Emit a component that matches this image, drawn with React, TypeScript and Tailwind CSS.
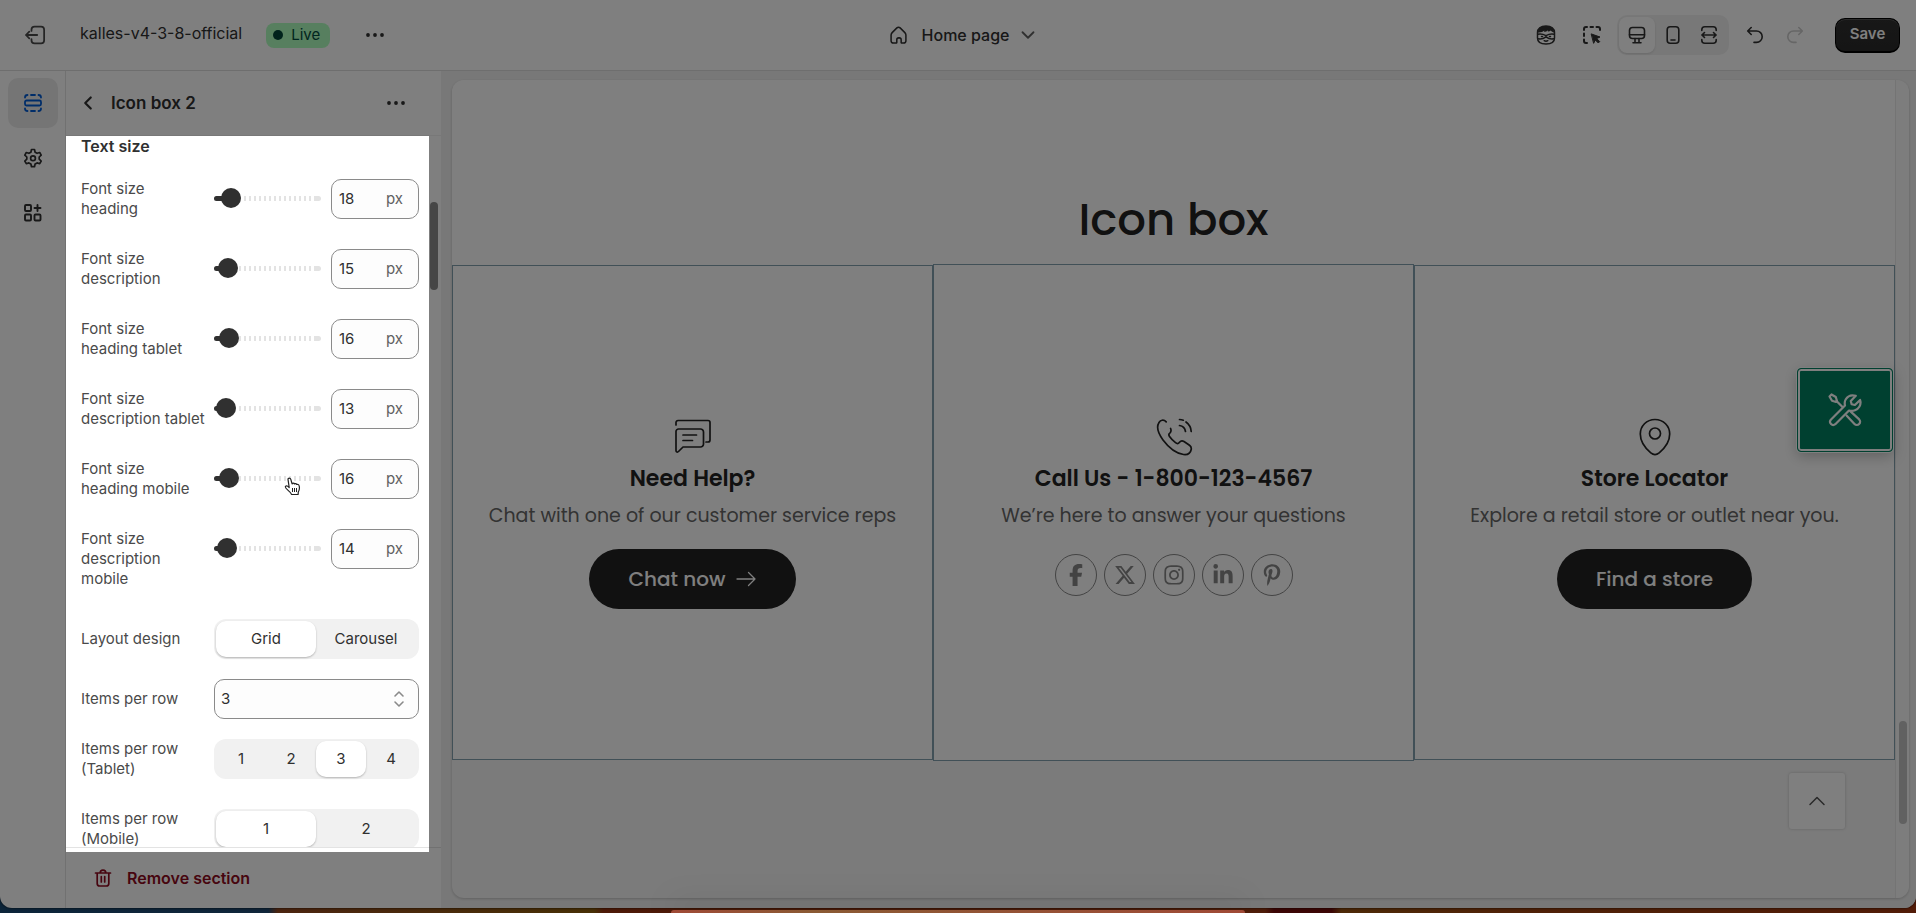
import React, { useState } from 'react';
import { ChevronDown, ChevronLeft, ChevronUp } from 'lucide-react';
import { FaFacebookF, FaInstagram, FaLinkedinIn, FaPinterestP, FaXTwitter } from 'react-icons/fa6';
import clsx from 'clsx';

const SIZES = [
    { id: 'heading', label: 'Font size\nheading', value: 18 },
    { id: 'description', label: 'Font size\ndescription', value: 15 },
    { id: 'heading-tablet', label: 'Font size\nheading tablet', value: 16 },
    { id: 'description-tablet', label: 'Font size\ndescription tablet', value: 13 },
    { id: 'heading-mobile', label: 'Font size\nheading mobile', value: 16 },
    { id: 'description-mobile', label: 'Font size\ndescription mobile', value: 14 },
];

const MIN = 11;
const MAX = 98;

const SOCIALS = [
    { name: 'Facebook', icon: FaFacebookF },
    { name: 'X', icon: FaXTwitter },
    { name: 'Instagram', icon: FaInstagram },
    { name: 'LinkedIn', icon: FaLinkedinIn },
    { name: 'Pinterest', icon: FaPinterestP },
];

type IconProps = { children: React.ReactNode; size?: number; box?: number; stroke?: number; className?: string };

function Icon({ children, size = 20, box = 20, stroke = 1.6, className }: IconProps) {
    return (
        <svg
            width={size}
            height={size}
            viewBox={`0 0 ${box} ${box}`}
            fill="none"
            stroke="currentColor"
            strokeWidth={stroke}
            strokeLinecap="round"
            strokeLinejoin="round"
            className={className}
            aria-hidden="true"
        >
            {children}
        </svg>
    );
}

function Dots() {
    return (
        <Icon>
            <g fill="currentColor" stroke="none">
                <circle cx="3" cy="10" r="1.9" />
                <circle cx="10" cy="10" r="1.9" />
                <circle cx="17" cy="10" r="1.9" />
            </g>
        </Icon>
    );
}

function TopBar() {
    return (
        <header className="flex h-[71px] shrink-0 items-center border-b border-[#dcdcdc] bg-white text-[#303030]">
            <div className="flex flex-1 items-center">
                <button aria-label="Exit" className="ml-6 text-[#4a4a4a]">
                    <Icon size={22}>
                        <path d="M6.800 6.300V5.200a2.800 2.800 0 0 1 2.800-2.800H15.500a2.800 2.800 0 0 1 2.800 2.800v9.600a2.800 2.800 0 0 1-2.800 2.800H9.600a2.800 2.800 0 0 1-2.800-2.800v-1.100" />
                        <path d="M12 10H1.800m3-3L1.800 10l3 3" />
                    </Icon>
                </button>
                <span className="ml-[34px] pb-1 text-base">kalles-v4-3-8-official</span>
                <span className="ml-6 flex h-[25px] items-center gap-2 rounded-lg bg-[#affebf] pr-2.5 pl-[7px] text-[15px] text-[#014b40]">
                    <span className="size-2.5 rounded-full bg-[#004438]" />
                    Live
                </span>
                <button aria-label="More actions" className="ml-[35px]">
                    <Dots />
                </button>
            </div>

            <button className="ml-7 flex items-center gap-3.5 text-base font-medium">
                <Icon size={19}>
                    <path d="M2.200 9.600c0-1 .4-1.900 1.100-2.600l5-5a2.400 2.400 0 0 1 3.400 0l5 5c.7.7 1.100 1.600 1.100 2.600V15.500a2.500 2.500 0 0 1-2.500 2.500h-1.800a.7.7 0 0 1-.7-.7V14.500a2 2 0 0 0-2-2h-.600a2 2 0 0 0-2 2v2.800a.7.7 0 0 1-.7.7H4.700a2.500 2.500 0 0 1-2.500-2.500z" />
                </Icon>
                Home page
                <ChevronDown size={22} strokeWidth={2} className="-ml-1.5 text-[#616161]" />
            </button>

            <div className="flex flex-1 items-center justify-end pr-4">
                <button aria-label="Sidekick">
                    <Icon size={20} stroke={1.5}>
                        <path d="M1.500 7.500C1.500 4 4.500 1 10 1s8.500 3 8.500 6.500V13c0 3.500-3 6-8.500 6s-8.500-2.500-8.500-6z" />
                        <path d="M2 7.500c-.5-4 3-6.500 8-6.500 5.200 0 8.500 2.500 8 6.500-1.200-.2-2.500-1-3.200-2-.8.8-2 1.200-3 1l.2-1.200c-1 1-2.500 1.500-4 1.500l.3-1.200C7 7 4.500 7.700 2 7.500z" fill="currentColor" stroke="none" />
                        <path d="M1.800 9.300c3-.6 5.700 0 8.200 1.300 2.500-1.300 5.200-1.900 8.200-1.300M2.500 13.800c3.500.7 5.500-.5 7.500-2 2 1.500 4 2.700 7.500 2" />
                        <path d="M5.500 11.500h1M13.500 11.500h1M8.200 15.700c1.200.8 2.400.8 3.600 0" />
                    </Icon>
                </button>
                <button aria-label="Select element" className="ml-[26px]">
                    <Icon size={20} stroke={2}>
                        <path d="M2 5V4a2 2 0 0 1 2-2h1M8.500 2h2.500M14.500 2H16a2 2 0 0 1 2 2v1M2 8.500V11M2 14.500V16a2 2 0 0 0 2 2h1" />
                        <path d="M9.500 9l8.500 3-3.300 1.600 3 3-1.400 1.400-3-3L11.800 18z" fill="currentColor" stroke="currentColor" strokeWidth={1} />
                    </Icon>
                </button>
                <div className="ml-[15px] flex h-10 items-center rounded-[10px] bg-[#f1f1f1] p-0.5">
                    <button aria-label="Desktop" aria-pressed="true" className="flex size-9 items-center justify-center rounded-lg bg-white shadow">
                        <Icon>
                            <rect x="2.500" y="2.500" width="15" height="11" rx="3" />
                            <path d="M2.500 9.700h15M8 13.500v4M12 13.500v4M6 17.800h8" />
                        </Icon>
                    </button>
                    <button aria-label="Mobile" className="flex h-9 w-9 items-center justify-center">
                        <Icon>
                            <rect x="4.200" y="1.800" width="11.600" height="16.400" rx="3" />
                            <path d="M8 15h4" />
                        </Icon>
                    </button>
                    <button aria-label="Full width" className="flex h-9 w-9 items-center justify-center">
                        <Icon>
                            <path d="M2.800 5.500v-.7a3 3 0 0 1 3-3h8.400a3 3 0 0 1 3 3v.7M2.800 14.500v.7a3 3 0 0 0 3 3h8.400a3 3 0 0 0 3-3v-.7" />
                            <path d="M2.800 10h14.400M5.500 7.500L3 10l2.500 2.500M14.500 7.500L17 10l-2.500 2.500" />
                        </Icon>
                    </button>
                </div>
                <button aria-label="Undo" className="ml-4">
                    <Icon>
                        <path d="M6.200 2.500L2.700 6l3.500 3.500M3 6h8.500a5.700 5.700 0 0 1 0 11.400H9" />
                    </Icon>
                </button>
                <button aria-label="Redo" disabled className="ml-5 text-[#cccccc]">
                    <Icon>
                        <path d="M13.800 2.500L17.300 6l-3.500 3.500M17 6H8.500a5.700 5.700 0 0 0 0 11.400H11" />
                    </Icon>
                </button>
                <button className="ml-[30px] h-[35px] w-[65px] rounded-[10px] border border-b-2 border-black bg-gradient-to-b from-[#303030] to-[#2a2a2a] text-[15px] font-semibold text-white shadow-[inset_0_1px_0_#555]">
                    Save
                </button>
            </div>
        </header>
    );
}

function Rail() {
    return (
        <nav className="flex w-[66px] shrink-0 flex-col items-center gap-[5px] border-r border-[#e3e3e3] pt-[7px] text-[#303030]">
            <button aria-label="Sections" className="flex size-[50px] items-center justify-center rounded-[10px] bg-[#ebebeb] text-[#005bd3]">
                <Icon stroke={1.8}>
                    <rect x="2" y="7.500" width="16" height="5" rx="1.500" />
                    <path d="M2 4.500A2.500 2.500 0 0 1 4.500 2M8 2h4M15.500 2A2.500 2.500 0 0 1 18 4.500M2 15.500A2.500 2.500 0 0 0 4.500 18M8 18h4M15.500 18a2.500 2.500 0 0 0 2.500-2.500" />
                </Icon>
            </button>
            <button aria-label="Theme settings" className="flex size-[50px] items-center justify-center">
                <Icon stroke={1.700}>
                    <path d="M8.500 1.500h3l.6 2.700 2 1.100 2.600-.8 1.500 2.600-2 1.900v2.200l2 1.900-1.500 2.600-2.600-.8-2 1.100-.6 2.700h-3l-.6-2.700-2-1.100-2.600.8-1.500-2.600 2-1.900V9l-2-1.900 1.500-2.600 2.600.8 2-1.100z" />
                    <circle cx="10" cy="10.200" r="2.400" />
                </Icon>
            </button>
            <button aria-label="App embeds" className="flex size-[50px] items-center justify-center">
                <Icon stroke={1.900}>
                    <rect x="2" y="2" width="6" height="6" rx="1" />
                    <rect x="2" y="11.500" width="6" height="6" rx="1" />
                    <rect x="11.500" y="11.500" width="6" height="6" rx="1" />
                    <path d="M14.500 2v6M11.500 5h6" />
                </Icon>
            </button>
        </nav>
    );
}

function SizeRow({ id, label, initial }: { id: string; label: string; initial: number }) {
    const [value, setValue] = useState(initial);
    const fill = ((value - MIN) / (MAX - MIN)) * 81 + 9;

    return (
        <div className="flex">
            <label htmlFor={id} className="mr-2 w-[125px] shrink-0 pb-2.5 whitespace-pre-line">
                {label}
            </label>
            <div className="relative mt-[17px] h-[5px] min-w-0 flex-1">
                <div className="flex h-full overflow-hidden rounded-full">
                    <div className="flex-1 bg-[repeating-linear-gradient(90deg,#e3e3e3_0_2px,transparent_2px_5px)]" />
                    <div className="w-[7px] bg-[#e3e3e3]" />
                </div>
                <div className="absolute inset-y-0 left-0 rounded-full bg-[#303030]" style={{ width: `${fill}%` }} />
                <input
                    id={id}
                    type="range"
                    min={MIN}
                    max={MAX}
                    value={value}
                    onChange={e => setValue(Number(e.target.value))}
                    className="absolute inset-x-0 -top-2 h-5 w-full cursor-pointer appearance-none bg-transparent [&::-webkit-slider-thumb]:size-5 [&::-webkit-slider-thumb]:appearance-none [&::-webkit-slider-thumb]:rounded-full [&::-webkit-slider-thumb]:bg-[#303030]"
                />
            </div>
            <div className="ml-2.5 flex h-10 w-[88px] items-center rounded-[10px] border border-[#8a8a8a] bg-[#fdfdfd] pr-[15px] pl-[7px]">
                <input
                    aria-label={`${label} value`}
                    inputMode="numeric"
                    value={value}
                    onChange={e => setValue(Number(e.target.value) || MIN)}
                    className="w-full min-w-0 bg-transparent text-[#303030] outline-none"
                />
                <span className="text-[#616161]">px</span>
            </div>
        </div>
    );
}

function Segmented({ label, options, initial, single }: { label: string; options: string[]; initial: string; single?: boolean }) {
    const [active, setActive] = useState(initial);

    return (
        <div className="flex" role="group" aria-label={label}>
            <span className={clsx('mr-2 w-[125px] shrink-0 pb-2.5', single && 'pt-2.5')}>{label}</span>
            <div className="flex h-10 flex-1 rounded-xl bg-[#f1f1f1] py-0.5 pr-[3px] pl-0.5">
                {options.map(o => (
                    <button
                        key={o}
                        aria-pressed={active === o}
                        onClick={() => setActive(o)}
                        className={clsx(
                            'flex-1 basis-0 rounded-[10px] text-[#303030]',
                            active === o && 'bg-white shadow-[0_1px_2px_rgba(0,0,0,0.25)]'
                        )}
                    >
                        {o}
                    </button>
                ))}
            </div>
        </div>
    );
}

function SettingsPanel() {
    return (
        <aside className="relative flex w-[375px] shrink-0 flex-col bg-white">
            <div className="flex h-[65px] shrink-0 items-center border-b border-[#f1f1f1] pr-[35px] pl-[11px] text-[#303030]">
                <button aria-label="Back">
                    <ChevronLeft size={22} strokeWidth={2.400} />
                </button>
                <h2 className="ml-3 flex-1 pt-0.5 text-[17px] font-semibold">Icon box 2</h2>
                <button aria-label="Section actions">
                    <Dots />
                </button>
            </div>

            <div className="min-h-0 flex-1 overflow-hidden pr-[22px] pl-[15px] text-[15px] leading-5 text-[#4a4a4a]">
                <h3 className="mb-[23px] text-base leading-5 font-semibold text-[#303030]">Text size</h3>
                <div className="flex flex-col gap-5">
                    {SIZES.map(s => (
                        <SizeRow key={s.id} id={s.id} label={s.label} initial={s.value} />
                    ))}
                    <Segmented label="Layout design" options={['Grid', 'Carousel']} initial="Grid" single />
                    <div className="flex">
                        <label htmlFor="per-row" className="mr-2 w-[125px] shrink-0 py-2.5">
                            Items per row
                        </label>
                        <div className="relative flex-1">
                            <select
                                id="per-row"
                                defaultValue="3"
                                className="h-10 w-full appearance-none rounded-[10px] border border-[#8a8a8a] bg-[#fdfdfd] px-1.5 text-[#303030]"
                            >
                                {['1', '2', '3', '4', '5', '6'].map(n => (
                                    <option key={n}>{n}</option>
                                ))}
                            </select>
                            <Icon size={20} stroke={1.600} className="pointer-events-none absolute top-2.5 right-2.5 text-[#8a8a8a]">
                                <path d="M6 7l4-4 4 4M6 13l4 4 4-4" />
                            </Icon>
                        </div>
                    </div>
                    <Segmented label="Items per row (Tablet)" options={['1', '2', '3', '4']} initial="3" />
                    <Segmented label="Items per row (Mobile)" options={['1', '2']} initial="1" />
                </div>
            </div>

            <div className="flex h-[61px] shrink-0 items-center border-t border-[#e3e3e3] pl-[27px]">
                <button className="flex items-center gap-3.5 text-base font-semibold text-[#8e0b21]">
                    <Icon size={20} stroke={1.700}>
                        <path d="M2.500 5h15M7.200 5a2.800 2.800 0 0 1 5.600 0M4.200 5v10.500A2.500 2.500 0 0 0 6.700 18h6.600a2.500 2.500 0 0 0 2.500-2.500V5M8.300 8.500v5.500M11.700 8.500v5.500" />
                    </Icon>
                    Remove section
                </button>
            </div>

            {/* scrollbar */}
            <div className="absolute top-[131px] right-[3px] h-[88px] w-2 rounded-full bg-[#8c8c8c]" />

            {/* spotlight: everything outside the settings list is dimmed */}
            <div className="pointer-events-none absolute top-[65px] right-3 bottom-14 left-0 z-50 shadow-[0_0_0_2400px_rgba(0,0,0,0.5)]" />

            {/* pointer */}
            <svg width="18" height="20" viewBox="0 0 18 20" className="pointer-events-none absolute top-[406px] left-[218px] z-50" aria-hidden="true">
                <path
                    d="M4 2.300C4 .7 6.400.7 6.800 2.300l1.300 4.500c.6-.9 2-.8 2.400.1.800-.6 1.900-.3 2.200.6.900-.4 2.200.1 2.400 1.200.6 2 .3 4.300-.8 6.300l-.2 2.500H7.600c-1-2-2.700-3.500-4-4.600C2 11.500.7 10.300 1.500 9.300c.9-1 2.400-.3 3.700 1.200z"
                    fill="#fff"
                    stroke="#222"
                    strokeWidth="1.200"
                    strokeLinejoin="round"
                />
                <path d="M8.500 11v4M10.500 11v4M12.500 11v4" stroke="#222" strokeWidth="1" />
            </svg>
        </aside>
    );
}

function BoxColumn({ icon, title, text, children, className }: { icon: React.ReactNode; title: string; text: string; children: React.ReactNode; className?: string }) {
    return (
        <div className={clsx('flex flex-1 basis-0 flex-col items-center justify-center border border-[#83a0ae]', className)}>
            <div className="flex h-10 items-center text-[#222222]">{icon}</div>
            <h4 className="mt-[7px] text-[22px] leading-[30px] font-semibold text-[#222222]">{title}</h4>
            <p className="mt-2 text-[19px] leading-7 text-[#666666]">{text}</p>
            {children}
        </div>
    );
}

function Preview() {
    return (
        <main className="flex min-w-0 flex-1 rounded-br-xl bg-[#f1f1f1] pt-[9px] pr-[7px] pb-2.5 pl-[11px]">
            <div className="relative flex min-w-0 flex-1 overflow-hidden rounded-xl bg-[#f6f6f6] font-['Poppins','Inter',sans-serif] shadow-[0_1px_3px_rgba(0,0,0,0.2)] [font-feature-settings:'cv11']">
                <div className="min-w-0 flex-1">
                    <section className="bg-white pt-[115px]">
                        <h1 className="mb-5 text-center text-[45px] leading-[50px] font-medium text-[#222222]">Icon box</h1>
                        <div className="flex h-[495px]">
                            <BoxColumn
                                title="Need Help?"
                                text="Chat with one of our customer service reps"
                                icon={
                                    <Icon size={38} box={38} stroke={1.700}>
                                        <path d="M2 7V4.500A2 2 0 0 1 4 2.500h30a2 2 0 0 1 2 2V22a2 2 0 0 1-2 2h-2" />
                                        <path d="M4.500 11h22a3 3 0 0 1 3 3v12a3 3 0 0 1-3 3H9l-4.500 4.500C3.500 34.500 2 34 2 32.500V13.500A2.500 2.500 0 0 1 4.500 11zM9 17h13.500M9 22.500h9.500" />
                                    </Icon>
                                }
                            >
                                <a href="#chat" className="mt-[19px] flex h-[60px] w-[207px] items-center justify-center gap-[11px] rounded-full bg-[#222222] text-xl font-medium text-white">
                                    Chat now
                                    <Icon size={20} stroke={1.300}>
                                        <path d="M1 10h18M12.500 3.500L19 10l-6.500 6.500" />
                                    </Icon>
                                </a>
                            </BoxColumn>
                            <BoxColumn
                                className="-my-px"
                                title="Call Us - 1-800-123-4567"
                                text="We’re here to answer your questions"
                                icon={
                                    <Icon size={38} box={38} stroke={1.700}>
                                        <path d="M11.200 3.800C8.500 1 5.500 2.200 4 4.500 1.500 8.500 2.500 14.500 8 22c6 8 13.500 13.500 20.500 14.500 4 .5 7-1.500 7.700-5 .4-2-.3-3.200-1.700-4.200l-5.500-3.800c-1.800-1.200-3.300-.8-4.500.8-1.300 1.700-2.600 1.500-4 .3-2.500-2-4.700-4.200-6-6.100-1-1.400-.8-2.500.3-3.400 1.500-1.300 1.600-2.600.8-4.600" />
                                        <path d="M24.500 1.500c1.500 0 2.500.2 3.800.7M31 4c3 2.200 5 5.500 5.200 9.500M24.500 7.500c3.500.5 5.500 2.700 6 6" />
                                    </Icon>
                                }
                            >
                                <div className="mt-[19px] flex h-[60px] gap-[7px] pt-[5px]">
                                    {SOCIALS.map(s => {
                                        const Glyph = s.icon;
                                        return (
                                            <a key={s.name} href={`#${s.name}`} aria-label={s.name} className="flex size-[42px] items-center justify-center rounded-full border border-[#878787] text-[#878787]">
                                                <Glyph size={22} />
                                            </a>
                                        );
                                    })}
                                </div>
                            </BoxColumn>
                            <BoxColumn
                                title="Store Locator"
                                text="Explore a retail store or outlet near you."
                                icon={
                                    <Icon size={38} box={38} stroke={1.700}>
                                        <path d="M19 1.500c8.500 0 14.700 6.500 14.700 14.500 0 7.500-4.700 14-10.500 18.800-2.700 2.200-5.700 2.200-8.400 0C9 30 4.300 23.500 4.300 16 4.300 8 10.500 1.500 19 1.500z" />
                                        <circle cx="19" cy="15.500" r="5.500" />
                                    </Icon>
                                }
                            >
                                <a href="#store" className="mt-[19px] flex h-[60px] w-[195px] items-center justify-center rounded-full bg-[#222222] text-xl font-medium text-white">
                                    Find a store
                                </a>
                            </BoxColumn>
                        </div>
                    </section>
                </div>
                <div className="relative w-3.5 border-l border-[#e8e8e8] bg-[#fafafa]">
                    <div className="absolute right-0.5 bottom-[74px] h-[103px] w-2 rounded-full bg-[#c2c2c2]" />
                </div>

                <button aria-label="Tools" className="absolute top-[288px] right-4 flex h-[84px] w-24 items-center justify-center rounded-sm border border-[#008060] bg-[#008060] text-white shadow-[inset_0_0_0_2px_#fff,0_0_0_1px_#fff,0_4px_14px_rgba(0,0,0,0.25)]">
                    <Icon size={34} box={34} stroke={2.200}>
                        <path d="M14 15.500L2.800 26.700a3.200 3.200 0 0 0 4.500 4.500L21 17.500c4 1.200 8.500-.5 10.500-4 1.200-2.200 1.300-4.500.6-6.500l-5.200 5-3.300-.8-.8-3.300 5-5.100c-4-1.200-8 .2-10 3.500-1.200 2-1.300 4.200-.8 6.200z" />
                        <path d="M18.500 22.500l8 8.500a3.200 3.200 0 0 0 4.700-4.600l-8.700-8M14.500 14L8.500 8" />
                        <path d="M3.500 1.500L7.800 4l1.200 4-1 1-4-1.200L1.500 3.500z" />
                    </Icon>
                </button>

                <button aria-label="Back to top" className="absolute right-16 bottom-[69px] flex size-14 items-center justify-center rounded-[3px] bg-white text-[#555] shadow-[0_0_3px_rgba(0,0,0,0.2)]">
                    <ChevronUp size={28} strokeWidth={1.300} />
                </button>
            </div>
        </main>
    );
}

export default function App() {
    return (
        <div className="relative h-screen overflow-hidden bg-[linear-gradient(90deg,#184a74_0%,#204c74_14%,#984a20_14.5%,#90600c_31%,#9c3410_31.5%,#a03c14_66%,#780c0a_66.5%,#780c0a_69.5%,#9c5410_70%,#a04410_79%,#a43810_100%)] pb-[5px] font-['Inter',sans-serif]">
            <div className="flex h-full flex-col rounded-b-xl bg-white shadow-[0_0_3px_rgba(0,0,0,0.8)]">
                <TopBar />
                <div className="flex min-h-0 flex-1">
                    <Rail />
                    <SettingsPanel />
                    <Preview />
                </div>
            </div>
            {/* edge of the dock peeking up at the bottom, drawn above the dimmer */}
            <div className="pointer-events-none absolute bottom-0 left-[35%] z-50 h-[3px] w-[30%] rounded-t-lg bg-[linear-gradient(90deg,#a04a36,#8a5a34_25%,#a04a36)] shadow-[0_-4px_30px_rgba(0,0,0,0.4)]" />
        </div>
    );
}
